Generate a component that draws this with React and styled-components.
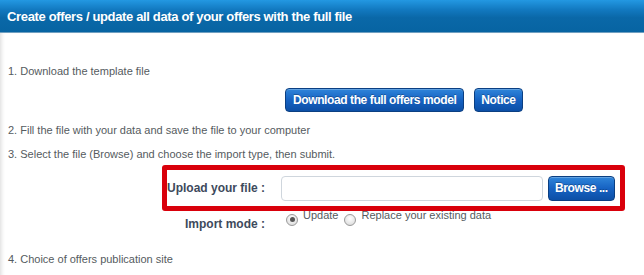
import React from 'react';
import styled, { createGlobalStyle } from 'styled-components';

const GlobalStyle = createGlobalStyle`
  html, body {
    margin: 0;
    padding: 0;
    background: #ffffff;
  }
  body {
    font-family: "Liberation Sans", Arial, sans-serif;
  }
`;

const Panel = styled.div`
  width: 644px;
  height: 275px;
  overflow: hidden;
  background: #fff;
`;

const Header = styled.div`
  height: 32px;
  border-bottom: 1px solid #6f9fc0;
  background: linear-gradient(to bottom, #2398e2 0%, #1279c0 30%, #0a68a8 55%, #0764a2 100%);
  display: flex;
  align-items: center;
  padding-left: 7px;
`;

const Title = styled.h1`
  margin: 0;
  font-family: "Liberation Sans", Arial, sans-serif;
  font-weight: bold;
  font-size: 13px;
  color: #fff;
  letter-spacing: -0.35px;
`;

const Body = styled.div`
  padding: 31px 0 0 8px;
  box-shadow: inset 4px 0 4px -3px #d8d8d8;
  height: 242px;
`;

const Step = styled.p`
  margin: ${p => p.$mt || 0}px 0 0 0;
  font-size: 11px;
  line-height: 14px;
  color: #555b60;
`;

const ButtonRow = styled.div`
  display: flex;
  gap: 10px;
  margin: 10px 0 0 277px;
`;

const BlueButton = styled.button`
  height: ${p => p.$h || 24}px;
  margin-left: ${p => p.$ml || 0}px;
  padding: 0 ${p => p.$pad || 7}px;
  border: 1px solid #0b3f82;
  border-radius: 4px;
  background: linear-gradient(to bottom, #2f85da 0%, #1662c2 50%, #0c4fa6 100%);
  box-shadow: inset 0 1px 0 rgba(255, 255, 255, 0.25);
  color: #fff;
  font-family: "Liberation Sans", Arial, sans-serif;
  font-weight: bold;
  font-size: 12px;
  letter-spacing: -0.4px;
  text-shadow: 0 -1px 0 rgba(0, 0, 0, 0.25);
  cursor: pointer;
`;

const Highlight = styled.div`
  margin: 4px 0 0 154px;
  width: 453px;
  height: 36px;
  border: 5px solid #d9000b;
  border-radius: 3px;
  display: flex;
  align-items: center;
`;

const FieldLabel = styled.label`
  width: 98px;
  flex-shrink: 0;
  text-align: right;
  font-size: 12px;
  font-weight: bold;
  color: #3d4a5c;
`;

const FileInput = styled.div`
  margin-left: 16px;
  width: 260px;
  height: 23px;
  border: 1px solid #cfd6dd;
  border-radius: 4px;
  background: #fff;
`;

const ModeRow = styled.div`
  display: flex;
  align-items: center;
  margin: -2px 0 0 159px;
  height: 26px;
`;

const ModeLabel = styled(FieldLabel)`
  margin-top: 4px;
`;

const Options = styled.div`
  display: flex;
  align-items: flex-start;
  margin: -10px 0 0 21px;
`;

const Option = styled.label`
  display: flex;
  align-items: flex-start;
  margin-right: 6px;
  font-size: 11px;
  color: #555b60;
`;

const Radio = styled.span`
  width: 10px;
  height: 10px;
  margin-top: 5px;
  margin-right: 5px;
  border-radius: 50%;
  border: 1px solid #9a9a9a;
  background: radial-gradient(circle at 50% 35%, #ffffff 0%, #e2e2e2 70%, #cfcfcf 100%);
  display: flex;
  align-items: center;
  justify-content: center;
  &::after {
    content: '';
    width: 5px;
    height: 5px;
    border-radius: 50%;
    background: ${p => (p.$checked ? '#555' : 'transparent')};
  }
`;

export default function App() {
  return (
    <>
      <GlobalStyle />
      <Panel>
        <Header>
          <Title>Create offers / update all data of your offers with the full file</Title>
        </Header>
        <Body>
          <Step>1. Download the template file</Step>
          <ButtonRow>
            <BlueButton>Download the full offers model</BlueButton>
            <BlueButton $pad={6}>Notice</BlueButton>
          </ButtonRow>
          <Step $mt={11}>2. Fill the file with your data and save the file to your computer</Step>
          <Step $mt={10}>3. Select the file (Browse) and choose the import type, then submit.</Step>
          <Highlight>
            <FieldLabel>Upload your file :</FieldLabel>
            <FileInput />
            <BlueButton $pad={6} $ml={5} $h={25}>Browse ...</BlueButton>
          </Highlight>
          <ModeRow>
            <ModeLabel>Import mode :</ModeLabel>
            <Options>
              <Option>
                <Radio $checked />
                Update
              </Option>
              <Option>
                <Radio />
                Replace your existing data
              </Option>
            </Options>
          </ModeRow>
          <Step $mt={17}>4. Choice of offers publication site</Step>
        </Body>
      </Panel>
    </>
  );
}
